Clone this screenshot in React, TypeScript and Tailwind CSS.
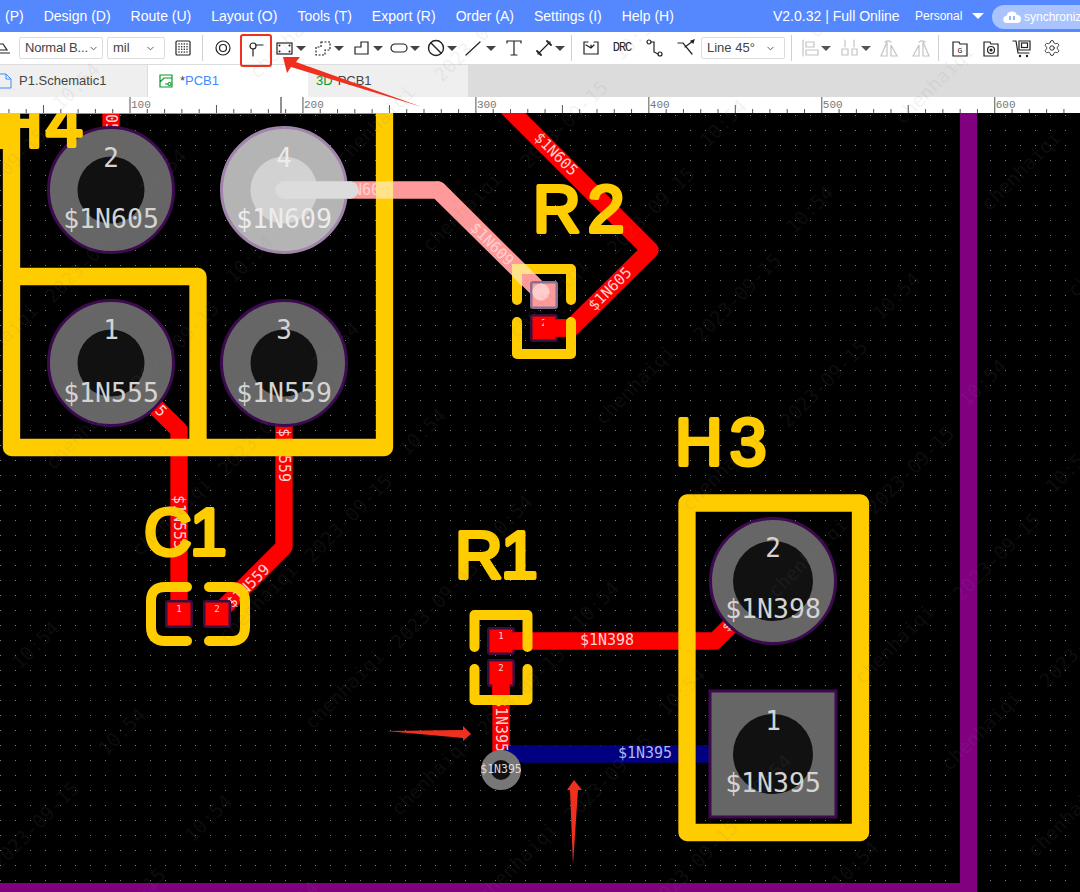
import { ChevronDown, Settings } from "lucide-react";
import type { ReactNode } from "react";

const menus = ["(P)", "Design (D)", "Route (U)", "Layout (O)", "Tools (T)", "Export (R)", "Order (A)", "Settings (I)", "Help (H)"];

const Icon = ({ children, className = "", muted = false }: { children: ReactNode; className?: string; muted?: boolean }) => (
  <svg viewBox="0 0 20 20" fill="none" stroke={muted ? "#c4c4c4" : "#222"} strokeWidth="1.2" strokeLinecap="round" className={`w-5 h-5 shrink-0 ${className}`}>
    {children}
  </svg>
);

const Caret = ({ muted = false, className = "" }: { muted?: boolean; className?: string }) => (
  <span className={`w-3 flex justify-center shrink-0 ${className}`}>
    <span className={`w-0 h-0 border-x-[5px] border-x-transparent border-t-[5px] ${muted ? "border-t-[#555]" : "border-t-[#444]"}`} />
  </span>
);

const Select = ({ label, className }: { label: string; className: string }) => (
  <div className={`h-[22px] flex items-center justify-between pl-[5px] pr-2 border border-[#dcdcdc] rounded-[2px] text-[13px] text-[#444] whitespace-nowrap shrink-0 ${className}`}>
    <span>{label}</span>
    <ChevronDown size={11} className="text-[#555] shrink-0" />
  </div>
);

const Sep = ({ className }: { className: string }) => <div className={`w-px h-[26px] bg-[#d0d0d0] shrink-0 ${className}`} />;

const Toolbar = () => (
  <div className="h-[33px] shrink-0 bg-white border-b border-[#dcdcdc] flex items-center">
    <svg viewBox="0 0 19 20" fill="none" stroke="#222" strokeWidth="1.2" className="w-[19px] h-5 shrink-0">
      <path d="M-3 6h6l4 6H-3M0 15h10" />
    </svg>
    <Select label="Normal B..." className="w-[84px] tracking-[-0.2px]" />
    <Select label="mil" className="w-[58px] ml-[4px]" />
    <Icon className="ml-[8px]">
      <rect x="3" y="3" width="14" height="14" rx="1" />
      <path d="M6 6h.01M8.700 6h.01M11.300 6h.01M14 6h.01M6 8.700h.01M8.700 8.700h.01M11.300 8.700h.01M14 8.700h.01M6 11.300h.01M8.700 11.300h.01M11.300 11.300h.01M14 11.300h.01M6 14h.01M8.700 14h.01M11.300 14h.01M14 14h.01" strokeWidth="1.600" />
    </Icon>
    <Sep className="ml-[9px]" />
    <Icon className="ml-[10px]">
      <circle cx="10" cy="10" r="7" />
      <circle cx="10" cy="10" r="3.5" />
    </Icon>
    <Icon className="ml-[12px]">
      <circle cx="8" cy="8" r="3" />
      <path d="M8 11v7M11 7h7" />
    </Icon>
    <Icon className="ml-[10px]">
      <rect x="2" y="5" width="15" height="11" />
      <path d="M4.500 7.500h.01M14.500 7.500h.01M4.500 13.500h.01M14.500 13.500h.01" strokeWidth="2" />
    </Icon>
    <Caret />
    <Icon className="ml-[6px]">
      <path d="M8 4h9v8h-5v5H3V9h5z" strokeDasharray="2 1.500" strokeLinecap="butt" />
    </Icon>
    <Caret />
    <Icon className="ml-[7px]">
      <path d="M3 16V9h6V4h7v12z" />
    </Icon>
    <Caret />
    <Icon className="ml-[5px]">
      <rect x="2" y="6" width="16" height="8" rx="4" />
    </Icon>
    <Caret />
    <Icon className="ml-[5px]">
      <circle cx="10" cy="10" r="7.500" strokeWidth="1.400" />
      <path d="M5 5l10 10" strokeWidth="1.400" />
    </Icon>
    <Caret />
    <Icon className="ml-[5px]">
      <path d="M3 17L17 4" />
    </Icon>
    <Caret className="ml-[2px]" />
    <Icon className="ml-[7px]">
      <path d="M3 5V3h14v2M10 3v14M7 17h6" />
    </Icon>
    <Icon className="ml-[10px]">
      <path d="M4 16L16 4" />
      <path d="M3 13l4 4M13 3l4 4" strokeWidth="1.800" />
    </Icon>
    <Caret />
    <Sep className="ml-[5px]" />
    <Icon className="ml-[9px]">
      <path d="M7 4H3v12h14V4h-4M5 7l5 3 3-3M10 10V7" />
    </Icon>
    <span className="ml-[11px] w-5 text-center text-[12px] leading-none text-[#222] font-['Liberation_Mono',monospace] tracking-[-1px] shrink-0">DRC</span>
    <Icon className="ml-[13px]">
      <circle cx="4" cy="4" r="2" />
      <circle cx="15" cy="16" r="2" />
      <path d="M6 4h3v10l4 2" />
    </Icon>
    <Icon className="ml-[11px]">
      <path d="M2 5h5l9 11M9 9l8-6" />
      <path d="M15 3l3-1-1 3z" fill="#222" />
    </Icon>
    <Select label="Line 45°" className="w-[84px] ml-[5px]" />
    <Sep className="ml-[6px]" />
    <Icon muted className="ml-[8px]">
      <path d="M3 2v16M6 4h8v5H6zM6 12h12v5H6z" />
    </Icon>
    <Caret muted />
    <Icon muted className="ml-[8px]">
      <path d="M5 2v7M14 2v7M2 11h6v6H2zM12 11h5v6h-5z" />
    </Icon>
    <Caret muted />
    <Icon muted className="ml-[7px]">
      <path d="M8 4v14H2zM12 7l6 11h-6zM6 4a5 5 0 0 1 6 0" />
    </Icon>
    <Icon muted className="ml-[12px]">
      <path d="M12 4v14h6zM8 7L2 18h6zM8 4a5 5 0 0 1 6 0" />
    </Icon>
    <Sep className="ml-[7px]" />
    <Icon className="ml-[11px]">
      <path d="M3 4h6l1 2h7v12H3z" />
      <text x="10" y="15" fontSize="8" textAnchor="middle" fill="#222" stroke="none" fontFamily="Liberation Mono, monospace">G</text>
    </Icon>
    <Icon className="ml-[11px]">
      <path d="M3 4h6l1 2h7v12H3z" />
      <circle cx="10" cy="12" r="3.500" />
      <circle cx="10" cy="12" r="1" fill="#222" />
    </Icon>
    <Icon className="ml-[11px]">
      <path d="M1 3h3l2 12h11M7 3h11v9H7z" />
      <rect x="9.500" y="5" width="6" height="4.500" />
      <path d="M8 18h.01M15 18h.01" strokeWidth="2.400" />
    </Icon>
    <span className="ml-[10px] w-5 flex justify-center shrink-0">
      <Settings size={18} strokeWidth={1.2} className="text-[#222]" />
    </span>
  </div>
);

const Tabs = () => (
  <div className="h-[32px] shrink-0 bg-[#dcdcdc] flex text-[13px]">
    <div className="w-[148px] bg-[#efefef] flex items-center border-r border-[#dcdcdc] shrink-0">
      <svg viewBox="0 0 12 16" fill="none" stroke="#3d8bfd" strokeWidth="1" className="w-3 h-4 shrink-0">
        <path d="M-3 1h9l5 5v9H-3z M6 1v5h5" />
      </svg>
      <span className="ml-[7px] text-[#444]">P1.Schematic1</span>
    </div>
    <div className="w-[160px] bg-white flex items-center pl-[10px] shrink-0">
      <svg viewBox="0 0 16 16" fill="none" stroke="#0a9a2a" strokeWidth="1.200" className="w-4 h-4 shrink-0">
        <path d="M2 2h12v12H2zM2 9l4-4h8M7 11h3" />
        <circle cx="11.500" cy="11" r="1.500" />
      </svg>
      <span className="ml-[6px] text-[#444]">*</span>
      <span className="text-[#3d8bfd]">PCB1</span>
    </div>
    <div className="w-[160px] bg-[#efefef] flex items-center pl-[8px] shrink-0">
      <span className="text-[#0a9a2a]">3D</span>
      <span className="ml-[5px] text-[#444]">PCB1</span>
    </div>
  </div>
);

const PX_PER_TICK = 17.295;
const RULER_ORIGIN = 130 - 10 * PX_PER_TICK;

const Ruler = () => {
  const ticks = Array.from({ length: 70 }, (_, i) => i);
  return (
    <svg viewBox="0 0 1080 16" className="w-[1080px] h-4 shrink-0 bg-white block">
      {ticks.map((i) => {
        const x = RULER_ORIGIN + i * PX_PER_TICK;
        const h = i % 10 === 0 ? 16 : i % 5 === 0 ? 8 : 4;
        return <line key={i} x1={x} x2={x} y1={16 - h} y2={16} stroke="#555" strokeWidth="1" />;
      })}
      {[100, 200, 300, 400, 500, 600].map((v, i) => (
        <text key={v} x={RULER_ORIGIN + (10 + i * 10) * PX_PER_TICK + 1} y={11} fontSize="11" fill="#777" fontFamily="Liberation Mono, monospace">
          {v}
        </text>
      ))}
      <line x1="281" x2="281" y1="0" y2="16" stroke="#222" strokeWidth="1" />
    </svg>
  );
};

const MONO = "DejaVu Sans Mono, monospace";
const RED = "#ff0000";
const SILK = "#ffcc00";

const NetLabel = ({ x, y, angle = 0, children, fill = "#ffd0d0", size = 15 }: { x: number; y: number; angle?: number; children: string; fill?: string; size?: number }) => (
  <text x={0} y={0} transform={`translate(${x} ${y}) rotate(${angle})`} textAnchor="middle" dominantBaseline="central" fontSize={size} fill={fill} fontFamily={MONO}>
    {children}
  </text>
);

const ThruPad = ({ x, y, hole, label, net, square = false, hi = false, numY, netY }: { x: number; y: number; hole: number; label: string; net: string; square?: boolean; hi?: boolean; numY: number; netY: number }) => {
  const ring = hi ? "#a283ac" : "#3d0a50";
  const fill = hi ? "#b4b4b4" : "#666666";
  return (
    <g>
      {square ? (
        <rect x={x - 63} y={y - 63} width={126} height={126} fill={fill} stroke={ring} strokeWidth="3" />
      ) : (
        <circle cx={x} cy={y} r={62.500} fill={fill} stroke={ring} strokeWidth="3" />
      )}
      <circle cx={x} cy={y} r={hole} fill={hi ? "#d2d2d2" : "#111111"} />
      <text x={x} y={numY} textAnchor="middle" fontSize="26" fill={hi ? "#ececec" : "#d4d4d4"} fontFamily={MONO}>{label}</text>
      <text x={x} y={netY} textAnchor="middle" fontSize="26.500" fill={hi ? "#ececec" : "#d4d4d4"} fontFamily={MONO}>{net}</text>
    </g>
  );
};

const SmdPad = ({ x, y, label, hi = false }: { x: number; y: number; label: string; hi?: boolean }) => (
  <g>
    <rect x={x - 14} y={y - 14} width={28} height={28} rx="3" fill={hi ? "#8a7095" : "#35103f"} />
    <rect x={x - 11.500} y={y - 11.500} width={23} height={23} fill={hi ? "#ff9a9a" : RED} />
    <text x={x} y={y - 2} textAnchor="middle" fontSize="9" fill="#ffd6d6" fontFamily={MONO}>{label}</text>
  </g>
);

const SilkText = ({ x, y, children }: { x: number; y: number; children: string }) => (
  <text x={x} y={y} fontSize="66" letterSpacing="7" fill={SILK} stroke={SILK} strokeWidth="4" strokeLinejoin="round" fontFamily="Liberation Sans, sans-serif">
    {children}
  </text>
);

const Board = () => (
  <div className="flex-1 min-h-0 bg-black">
    <svg viewBox="0 113 1080 779" className="w-[1080px] h-full block">
      <defs>
        <pattern id="grid" x="0" y="10" width="15" height="15" patternUnits="userSpaceOnUse">
          <rect width="1" height="1" fill="#808080" />
        </pattern>
      </defs>
      <rect x="0" y="113" width="1080" height="779" fill="url(#grid)" />

      {/* board outline */}
      <path d="M968.500 113V891.500H0" fill="none" stroke="#800080" strokeWidth="17" />

      {/* top layer tracks */}
      <g fill="none" stroke={RED} strokeWidth="17.300">
        <path d="M111 190V100" />
        <path d="M544 328H571L650 250L500 100" strokeLinejoin="round" />
        <path d="M111 363L179 430V614" strokeLinejoin="round" />
        <path d="M284 363V547L217 614" strokeLinejoin="round" />
        <path d="M501 641H715L773 583" strokeLinejoin="round" />
        <path d="M501 673V770" />
      </g>
      <path d="M438 190L544 295" fill="none" stroke="#ff9a9a" strokeWidth="17.300" strokeLinecap="round" />
      <path d="M350 190H438" fill="none" stroke="#ff9a9a" strokeWidth="17.300" strokeLinecap="round" />
      <path d="M512 754H773" fill="none" stroke="#000080" strokeWidth="17.300" strokeLinecap="round" />

      {/* net names on the tracks */}
      <NetLabel x={111} y={105} angle={90}>$1N605</NetLabel>
      <NetLabel x={556} y={154} angle={45}>$1N605</NetLabel>
      <NetLabel x={610} y={289} angle={-45}>$1N605</NetLabel>
      <NetLabel x={492} y={244} angle={45}>$1N609</NetLabel>
      <NetLabel x={362} y={190}>$1N609</NetLabel>
      <NetLabel x={145} y={395} angle={45}>$1N555</NetLabel>
      <NetLabel x={179} y={522} angle={90}>$1N555</NetLabel>
      <NetLabel x={284} y={455} angle={90}>$1N559</NetLabel>
      <NetLabel x={248} y={586} angle={-45}>$1N559</NetLabel>
      <NetLabel x={607} y={640}>$1N398</NetLabel>
      <NetLabel x={501} y={725} angle={90}>$1N395</NetLabel>
      <NetLabel x={645} y={753} fill="#b4b4ee">$1N395</NetLabel>
      <NetLabel x={727} y={627} angle={-45} size={12}>$</NetLabel>

      {/* through hole pads */}
      <ThruPad x={111} y={190} hole={33.500} label="2" net="$1N605" numY={167} netY={228} />
      <ThruPad x={284} y={190} hole={33.500} label="4" net="$1N609" hi numY={167} netY={228} />
      <ThruPad x={111} y={363} hole={33.500} label="1" net="$1N555" numY={339} netY={402} />
      <ThruPad x={284} y={363} hole={33.500} label="3" net="$1N559" numY={339} netY={402} />
      <ThruPad x={773} y={581} hole={40} label="2" net="$1N398" numY={557} netY={618} />
      <ThruPad x={773} y={754} hole={40} label="1" net="$1N395" square numY={730} netY={792} />
      <path d="M284 190H350" fill="none" stroke="#dcdcdc" strokeWidth="17.300" strokeLinecap="round" />

      {/* SMD pads */}
      <SmdPad x={544} y={295} label="1" hi />
      <circle cx="541" cy="292" r="8.600" fill="#ffcccc" />
      <SmdPad x={544} y={328} label="2" />
      <path d="M544 328H571" fill="none" stroke={RED} strokeWidth="17.300" />
      <SmdPad x={501} y={641} label="1" />
      <path d="M512 641H530" fill="none" stroke={RED} strokeWidth="17.300" />
      <SmdPad x={501} y={673} label="2" />
      <path d="M501 680V700" fill="none" stroke={RED} strokeWidth="17.300" />
      <SmdPad x={179} y={614} label="1" />
      <SmdPad x={217} y={614} label="2" />

      {/* silkscreen */}
      <g fill="none" stroke={SILK}>
        <path d="M11.500 105V447.500H384.500V105Z M11.500 276.500H198V447.500" strokeWidth="17.300" strokeLinejoin="round" />
        <path d="M687 503H860.500V832.500H687Z" strokeWidth="17.300" strokeLinejoin="round" />
        <g strokeWidth="10" strokeLinecap="round" strokeLinejoin="round">
          <path d="M517 300V269H571V300M517 322V354H571V322" />
          <path d="M474.500 647V615H527.500V647M474.500 669V700H527.500V669" />
          <path d="M187 587H165Q151 587 151 601V627Q151 641 165 641H187M209 587H231Q245 587 245 601V627Q245 641 231 641H209" />
        </g>
      </g>
      <path d="M376 190H393" stroke="#ffe28a" strokeWidth="17.300" />
      <polygon points="512,264 525,264 535,274 522,274 522,286 512,276" fill="#ffe28a" />
      <SilkText x={-5} y={147}>H</SilkText>
      <SilkText x={46} y={146}>4</SilkText>
      <SilkText x={533} y={232}>R2</SilkText>
      <SilkText x={675} y={465}>H3</SilkText>
      <SilkText x={144} y={555}>C</SilkText>
      <SilkText x={190} y={555}>1</SilkText>
      <SilkText x={455} y={578}>R</SilkText>
      <SilkText x={501} y={578}>1</SilkText>

      {/* via */}
      <circle cx="501" cy="770" r="15" fill="#111111" stroke="#777777" strokeWidth="10" />
      <text x="501" y="773" textAnchor="middle" fontSize="11.500" fill="#dddddd" fontFamily={MONO}>$1N395</text>
    </svg>
  </div>
);

// chenhaiqi / 2023-09-15 / 10:54 repeat on diagonals across the whole window
const marks: { text: string; offset: number; phase: number }[] = [
  { text: "10:54", offset: 10, phase: 81 },
  { text: "10:54", offset: 610, phase: 40 },
  { text: "10:54", offset: -600, phase: 36 },
  { text: "chenhaiqi", offset: 345, phase: 3 },
  { text: "chenhaiqi", offset: -250, phase: 34 },
  { text: "chenhaiqi", offset: -850, phase: 74 },
  { text: "2023-09-15", offset: 170, phase: 7 },
  { text: "2023-09-15", offset: -440, phase: 50 },
  { text: "2023-09-15", offset: 790, phase: 40 },
];

const Watermark = () => (
  <svg viewBox="0 0 1080 892" className="absolute inset-0 w-[1080px] h-[892px] pointer-events-none">
    {marks.flatMap((m) =>
      Array.from({ length: 14 }, (_, i) => {
        const x = m.phase + i * 86.500;
        const y = x + m.offset;
        return (
          <text key={`${m.text}${m.offset}${i}`} transform={`translate(${x} ${y}) rotate(-45)`} textAnchor="middle" fontSize="19" fill="#808080" fillOpacity="0.11" fontFamily={MONO}>
            {m.text}
          </text>
        );
      })
    )}
  </svg>
);

const Annotations = () => (
  <>
    <div className="absolute left-[240px] top-[34px] w-[32px] h-[33px] border-2 border-[#f0301e] rounded-[3px]" />
    <svg viewBox="0 0 1080 892" className="absolute inset-0 w-[1080px] h-[892px] pointer-events-none">
      <g fill="#f0301e">
        <polygon points="283,57 300,57 296,62 422,107 291,67 287,73" />
        <polygon points="386,731 463,730 463,726 471,734 463,741 463,738" />
        <polygon points="574,780 582,790 578,790 573,865 570,790 567,790" />
      </g>
    </svg>
  </>
);

export default function App() {
  return (
    <div className="relative w-[1080px] h-[892px] overflow-hidden flex flex-col font-['Liberation_Sans',Arial,sans-serif]">
      <header className="h-8 shrink-0 bg-[#5588ff] flex items-center text-white text-sm pl-[5px]">
        <nav className="flex gap-5">
          {menus.map((m) => (
            <span key={m}>{m}</span>
          ))}
        </nav>
        <span className="absolute left-[773px]">V2.0.32 | Full Online</span>
        <span className="absolute left-[915px] text-xs">Personal</span>
        <span className="absolute left-[972px] w-0 h-0 border-x-[6px] border-x-transparent border-t-[6px] border-t-white" />
        <div className="absolute left-[992px] top-[5px] w-[110px] h-[24px] rounded-full bg-[#a9c3ff] flex items-center pl-[11px] gap-[3px]">
          <svg viewBox="0 0 18 14" className="w-[18px] h-[14px] shrink-0">
            <path d="M4 13a3.500 3.500 0 0 1-.5-7A5.500 5.500 0 0 1 14 5a4 4 0 0 1 0 8z" fill="#fff" />
            <path d="M7 10V6M11 6v4" stroke="#5588ff" strokeWidth="1.200" />
          </svg>
          <span className="text-xs whitespace-nowrap">synchronize</span>
        </div>
      </header>
      <Toolbar />
      <Tabs />
      <Ruler />
      <Board />
      <Watermark />
      <Annotations />
    </div>
  );
}
